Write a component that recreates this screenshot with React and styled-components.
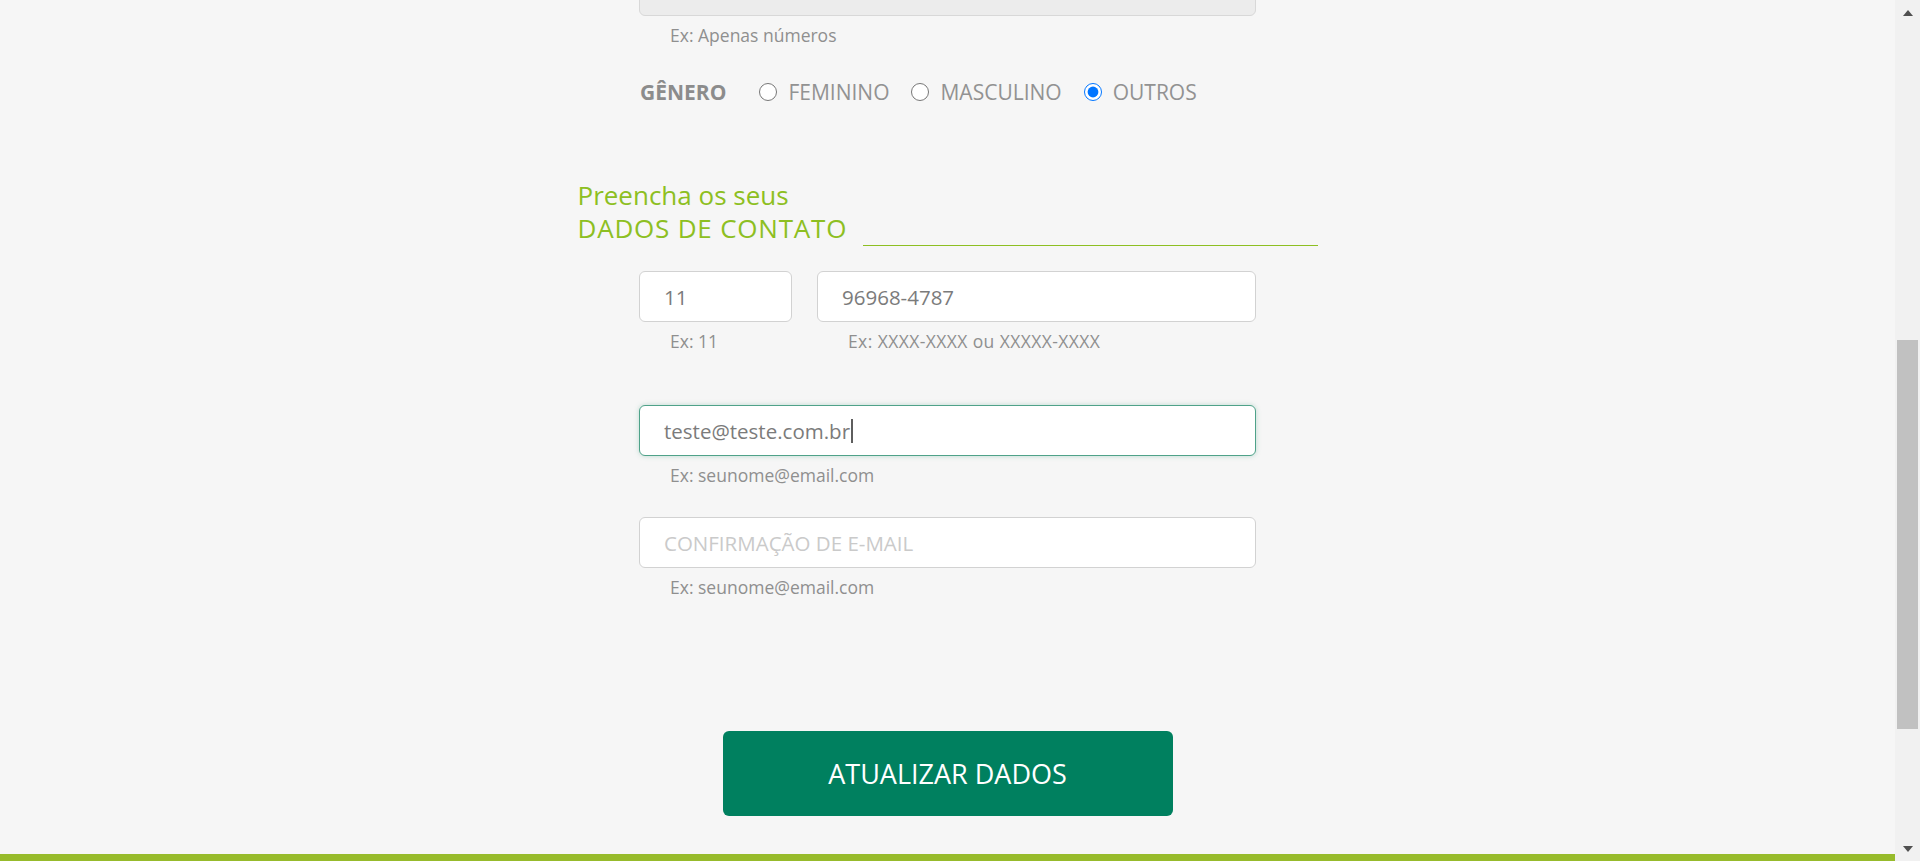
import React from 'react';
import styled, { createGlobalStyle, css } from 'styled-components';

// pagina de atualizacao de cadastro - bloco de contato

function App() {
  return (
    <>
      <GlobalStyle />
      <Page>
        <Main>
          <Content>
            <Group $offset={-35}>
              <Input $muted disabled readOnly value="" />
              <Hint>Ex: Apenas números</Hint>
            </Group>

            <GenderRow>
              <GenderLabel>GÊNERO</GenderLabel>
              <Option>
                <Radio type="radio" name="genero" readOnly />
                FEMININO
              </Option>
              <Option>
                <Radio type="radio" name="genero" readOnly />
                MASCULINO
              </Option>
              <Option>
                <Radio type="radio" name="genero" defaultChecked />
                OUTROS
              </Option>
            </GenderRow>

            <SectionTitle>
              <TitleText>
                <TitleLine>Preencha os seus</TitleLine>
                <TitleLine $caps>DADOS DE CONTATO</TitleLine>
              </TitleText>
              <TitleRule />
            </SectionTitle>

            <PhoneRow>
              <Group $width="153px">
                <Input readOnly value="11" />
                <Hint>Ex: 11</Hint>
              </Group>
              <Group $grow>
                <Input readOnly value="96968-4787" />
                <Hint $wide>Ex: XXXX-XXXX ou XXXXX-XXXX</Hint>
              </Group>
            </PhoneRow>

            <Group $offset={52}>
              <FocusedField>
                teste@teste.com.br
                <Caret />
              </FocusedField>
              <Hint>Ex: seunome@email.com</Hint>
            </Group>

            <Group $offset={30}>
              <Input placeholder="CONFIRMAÇÃO DE E-MAIL" />
              <Hint>Ex: seunome@email.com</Hint>
            </Group>

            <SubmitButton type="button">ATUALIZAR DADOS</SubmitButton>
          </Content>
          <FooterBar />
        </Main>

        <ScrollBar>
          <ArrowBox>
            <Arrow />
          </ArrowBox>
          <Track>
            <Thumb $top={315} $height={389} />
          </Track>
          <ArrowBox>
            <Arrow $down />
          </ArrowBox>
        </ScrollBar>
      </Page>
    </>
  );
}

const GlobalStyle = createGlobalStyle`
  html, body {
    margin: 0;
    padding: 0;
    height: 100%;
    overflow: hidden;
  }
  body {
    background: #f6f6f6;
    font-family: 'Open Sans', 'Liberation Sans', sans-serif;
  }
  * { box-sizing: border-box; }
`;

const Page = styled.div`
  display: flex;
  height: 861px;
  background: #f6f6f6;
`;

const Main = styled.div`
  flex: 1;
  min-width: 0;
  display: flex;
  flex-direction: column;
`;

const Content = styled.div`
  flex: 1;
  width: 740px;
  margin: 0 auto;
  display: flex;
  flex-direction: column;
  align-items: center;
`;

const Group = styled.div`
  display: flex;
  flex-direction: column;
  width: ${(p) => p.$width || '617px'};
  flex: ${(p) => (p.$grow ? 1 : 'none')};
  margin-top: ${(p) => p.$offset || 0}px;
`;

const fieldBox = css`
  width: 100%;
  height: 51px;
  border: 1px solid #d2d2d2;
  border-radius: 6px;
  background: #fff;
  padding: 0 0 0 24px;
  font-family: 'Open Sans', 'Liberation Sans', sans-serif;
  font-size: 20.5px;
  color: #7b7b7b;
`;

const Input = styled.input`
  ${fieldBox}
  outline: none;
  background: ${(p) => (p.$muted ? '#ececec' : '#fff')};
  border-color: ${(p) => (p.$muted ? '#d8d8d8' : '#d2d2d2')};

  &::placeholder {
    color: #cacaca;
  }
`;

const FocusedField = styled.div`
  ${fieldBox}
  display: flex;
  align-items: center;
  border-color: #4fa289;
  box-shadow: 0 0 5px rgba(79, 162, 137, 0.35);
`;

const Caret = styled.span`
  display: inline-block;
  width: 1.5px;
  height: 24px;
  margin-left: 1px;
  background: #5e5e5e;
`;

const Hint = styled.div`
  margin-top: 7px;
  padding-left: 31px;
  font-size: 17.5px;
  line-height: 24px;
  color: #8f8f8f;
  letter-spacing: ${(p) => (p.$wide ? '0.4px' : '0')};
  white-space: nowrap;
`;

const GenderRow = styled.div`
  width: 617px;
  margin-top: 31px;
  display: flex;
  align-items: center;
  height: 28px;
  padding-left: 1px;
  gap: 22px;
`;

const GenderLabel = styled.span`
  font-size: 21px;
  line-height: 28px;
  font-weight: 700;
  color: #8c8c8c;
  margin-right: 11px;
`;

const Option = styled.label`
  display: flex;
  align-items: center;
  gap: 11px;
  font-size: 21px;
  line-height: 28px;
  color: #929292;
`;

const Radio = styled.input`
  width: 18px;
  height: 18px;
  margin: 0;
  accent-color: #0075ff;
`;

const SectionTitle = styled.div`
  width: 100%;
  margin-top: 73px;
  display: flex;
  align-items: flex-end;
`;

const TitleText = styled.div`
  display: flex;
  flex-direction: column;
`;

const TitleLine = styled.span`
  font-size: 26px;
  line-height: 33px;
  color: #8dbf22;
  letter-spacing: ${(p) => (p.$caps ? '0.8px' : '0')};
  white-space: nowrap;
`;

const TitleRule = styled.div`
  flex: 1;
  height: 1px;
  margin: 0 0 -1px 16px;
  background: #8dbf22;
`;

const PhoneRow = styled.div`
  width: 617px;
  margin-top: 26px;
  display: flex;
  gap: 25px;
`;

const SubmitButton = styled.button`
  margin-top: 132px;
  width: 450px;
  height: 85px;
  border: none;
  border-radius: 6px;
  background: #00805f;
  color: #fff;
  font-family: 'Open Sans', 'Liberation Sans', sans-serif;
  font-size: 27px;
  cursor: pointer;
`;

const FooterBar = styled.div`
  height: 7px;
  background: #97bb2b;
`;

const ScrollBar = styled.div`
  width: 25px;
  display: flex;
  flex-direction: column;
  background: #f1f1f1;
`;

const ArrowBox = styled.div`
  height: 25px;
  display: flex;
  align-items: center;
  justify-content: center;
`;

const Arrow = styled.div`
  width: 0;
  height: 0;
  border-left: 5.5px solid transparent;
  border-right: 5.5px solid transparent;
  ${(p) =>
    p.$down
      ? 'border-top: 6px solid #505050;'
      : 'border-bottom: 6px solid #505050;'}
`;

const Track = styled.div`
  flex: 1;
`;

const Thumb = styled.div`
  margin: ${(p) => p.$top}px 2px 0;
  height: ${(p) => p.$height}px;
  background: #c1c1c1;
`;

export default App;
